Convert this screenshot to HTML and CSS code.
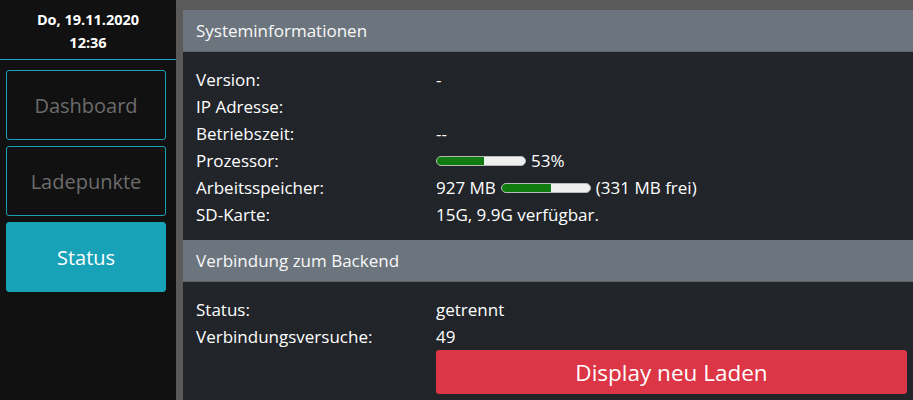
FILE: index.html
```html
<!DOCTYPE html>
<html lang="de">
<head>
<meta charset="utf-8">
<title>Status</title>
<link rel="stylesheet" href="styles.css">
</head>
<body>
<div class="app">
  <aside class="sidebar">
    <div class="clock">
      <div class="clock-line">Do, 19.11.2020</div>
      <div class="clock-line">12:36</div>
    </div>
    <nav class="nav">
      <a class="nav-btn">Dashboard</a>
      <a class="nav-btn">Ladepunkte</a>
      <a class="nav-btn active">Status</a>
    </nav>
  </aside>
  <main class="main">
    <section class="card">
      <div class="card-header">Systeminformationen</div>
      <div class="card-body">
        <div class="info-grid">
          <div class="label">Version:</div><div class="value">-</div>
          <div class="label">IP Adresse:</div><div class="value"></div>
          <div class="label">Betriebszeit:</div><div class="value">--</div>
          <div class="label">Prozessor:</div>
          <div class="value"><span class="bar"><span class="bar-fill" style="width:53%"></span></span> 53%</div>
          <div class="label">Arbeitsspeicher:</div>
          <div class="value">927 MB <span class="bar"><span class="bar-fill" style="width:56%"></span></span> (331 MB frei)</div>
          <div class="label">SD-Karte:</div><div class="value">15G, 9.9G verfügbar.</div>
        </div>
      </div>
    </section>
    <section class="card">
      <div class="card-header">Verbindung zum Backend</div>
      <div class="card-body">
        <div class="info-grid">
          <div class="label">Status:</div><div class="value">getrennt</div>
          <div class="label">Verbindungsversuche:</div><div class="value">49</div>
          <div class="label"></div><div class="value"><button class="btn-danger">Display neu Laden</button></div>
        </div>
      </div>
    </section>
  </main>
</div>
</body>
</html>
```
FILE: styles.css
```css
* { box-sizing: border-box; }
html, body { margin: 0; padding: 0; height: 100%; }
body {
  background: #111111;
  font-family: "Open Sans", "Noto Sans", sans-serif;
  color: #ffffff;
  overflow: hidden;
}
.app {
  display: flex;
  height: 400px;
}
.sidebar {
  width: 176px;
  flex: 0 0 176px;
  background: #111111;
}
.clock {
  padding-top: 8px;
  height: 60px;
  border-bottom: 1px solid #17a2b8;
  text-align: center;
  font-weight: 700;
  font-size: 14.5px;
}
.clock-line { line-height: 23px; }
.nav {
  display: flex;
  flex-direction: column;
  gap: 6px;
  padding: 10px 10px 0 6px;
}
.nav-btn {
  display: flex;
  align-items: center;
  justify-content: center;
  height: 70px;
  border: 1px solid #17a2b8;
  border-radius: 3px;
  color: #6c6c6c;
  font-size: 20px;
}
.nav-btn.active {
  background: #17a2b8;
  color: #ffffff;
}
.main {
  flex: 1;
  background: #5a5a5a;
  padding: 10px 0 0 7px;
  display: flex;
  flex-direction: column;
}
.card {
  background: #212529;
}
.card-header {
  background: #6c757d;
  height: 42px;
  border-bottom: 1px solid #5d646b;
  padding: 0 13px;
  display: flex;
  align-items: center;
  font-size: 17px;
  color: #f8f9fa;
}
.card-body {
  padding: 14px 6px 12px 13px;
}
.info-grid {
  display: grid;
  grid-template-columns: 240px 1fr;
  font-size: 17px;
  line-height: 27px;
}
.value { display: flex; align-items: center; gap: 5px; min-height: 27px; }
.bar {
  display: inline-block;
  width: 90px;
  height: 10px;
  background: #efefef;
  border: 1px solid #b8b8b8;
  border-radius: 5px;
  overflow: hidden;
}
.bar-fill {
  display: block;
  height: 100%;
  background: #107c10;
}
.btn-danger {
  width: 100%;
  height: 44px;
  background: #dc3545;
  color: #ffffff;
  border: none;
  border-radius: 3px;
  font-family: inherit;
  font-size: 22.5px;
  padding: 0;
}
```
